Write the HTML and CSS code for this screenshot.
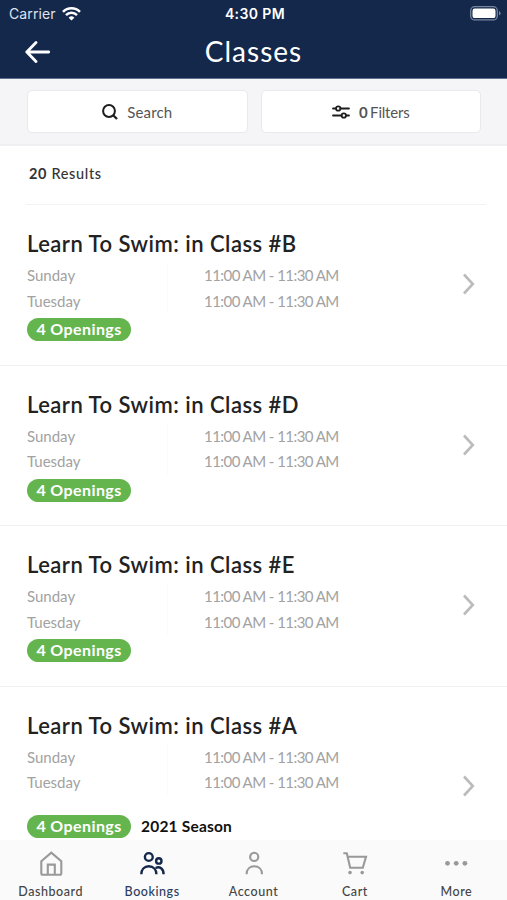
FILE: index.html
```html
<!DOCTYPE html>
<html lang="en">

<head>
  <meta charset="UTF-8">
  <meta name="viewport" content="width=device-width, initial-scale=1.0">
  <title>Classes</title>
  <link rel="stylesheet" href="styles.css">
</head>

<body>
  <header>
    <div class="status-bar">
      <div class="carrier">
        <span>Carrier</span>
        <svg width="19" height="14" viewBox="0 0 19 14" fill="none" stroke="#fff" stroke-width="2.5">
          <path d="M1 4.9a12 12 0 0 1 17 0" />
          <path d="M4 8.1a7.8 7.8 0 0 1 11 0" />
          <path d="M9.5 13.6L6.6 10.7a4.1 4.1 0 0 1 5.8 0z" fill="#fff" stroke="none" />
        </svg>
      </div>
      <div class="time">4:30 PM</div>
      <div class="battery">
        <svg width="31" height="15" viewBox="0 0 31 15">
          <rect x=".7" y=".7" width="26.6" height="13.2" rx="4" fill="none" stroke="#7885a0" stroke-width="1.3" />
          <rect x="2.5" y="2.5" width="23" height="9.6" rx="2.2" fill="#fff" />
          <path d="M29 5v4.6q1.600-.8 1.600-2.300T29 5z" fill="#7885a0" />
        </svg>
      </div>
    </div>
    <div class="nav-bar">
      <svg width="26" height="22" viewBox="0 0 26 22" fill="none" stroke="#fff" stroke-width="2.8" stroke-linecap="round" stroke-linejoin="round">
        <path d="M11 1.500L1.800 11l9.200 9.500M1.800 11h21.900" />
      </svg>
      <h1>Classes</h1>
    </div>
  </header>

  <div class="toolbar">
    <button class="tool-btn">
      <svg width="16" height="16" viewBox="0 0 16 16" fill="none" stroke="#1d1d1d" stroke-width="2">
        <circle cx="7" cy="7" r="5.9" />
        <path d="M11.2 11.2L15 15" stroke-width="2.3" />
      </svg>
      <span class="search-label">Search</span>
    </button>
    <button class="tool-btn">
      <svg width="18" height="14" viewBox="0 0 18 14" fill="none" stroke="#1d1d1d" stroke-width="1.8" stroke-linecap="round">
        <path d="M1 3.500h3M8.500 3.500H17M1 10.500h8.500M14 10.500h3" />
        <circle cx="6.2" cy="3.5" r="2.2" />
        <circle cx="11.8" cy="10.5" r="2.2" />
      </svg>
      <span class="filter-label"><b>0</b> Filters</span>
    </button>
  </div>

  <main>
    <div class="results"><b>20</b> Results</div>

    <div class="card">
      <div class="card-body">
        <h2>Learn To Swim: in Class #B</h2>
        <div class="schedule">
          <div class="days">
            <div>Sunday</div>
            <div>Tuesday</div>
          </div>
          <div class="times">
            <div>11:00 AM - 11:30 AM</div>
            <div>11:00 AM - 11:30 AM</div>
          </div>
        </div>
        <div class="tags"><span class="badge">4 Openings</span></div>
      </div>
      <svg class="chevron" width="12" height="22" viewBox="0 0 12 22"><path d="M1 1.500L9.800 11L1 20.500" /></svg>
    </div>

    <div class="card">
      <div class="card-body">
        <h2>Learn To Swim: in Class #D</h2>
        <div class="schedule">
          <div class="days">
            <div>Sunday</div>
            <div>Tuesday</div>
          </div>
          <div class="times">
            <div>11:00 AM - 11:30 AM</div>
            <div>11:00 AM - 11:30 AM</div>
          </div>
        </div>
        <div class="tags"><span class="badge">4 Openings</span></div>
      </div>
      <svg class="chevron" width="12" height="22" viewBox="0 0 12 22"><path d="M1 1.500L9.800 11L1 20.500" /></svg>
    </div>

    <div class="card">
      <div class="card-body">
        <h2>Learn To Swim: in Class #E</h2>
        <div class="schedule">
          <div class="days">
            <div>Sunday</div>
            <div>Tuesday</div>
          </div>
          <div class="times">
            <div>11:00 AM - 11:30 AM</div>
            <div>11:00 AM - 11:30 AM</div>
          </div>
        </div>
        <div class="tags"><span class="badge">4 Openings</span></div>
      </div>
      <svg class="chevron" width="12" height="22" viewBox="0 0 12 22"><path d="M1 1.500L9.800 11L1 20.500" /></svg>
    </div>

    <div class="card card-season">
      <div class="card-body">
        <h2>Learn To Swim: in Class #A</h2>
        <div class="schedule">
          <div class="days">
            <div>Sunday</div>
            <div>Tuesday</div>
          </div>
          <div class="times">
            <div>11:00 AM - 11:30 AM</div>
            <div>11:00 AM - 11:30 AM</div>
          </div>
        </div>
        <div class="tags"><span class="badge">4 Openings</span><span class="season">2021 Season</span></div>
      </div>
      <svg class="chevron" width="12" height="22" viewBox="0 0 12 22"><path d="M1 1.500L9.800 11L1 20.500" /></svg>
    </div>
  </main>

  <nav class="tab-bar">
    <a class="tab">
      <svg width="26" height="26" viewBox="0 0 26 26">
        <path d="M3.300 11.300L13.300 2.700l10 8.600v12q0 1.500-1.500 1.500h-17q-1.500 0-1.500-1.500z" />
        <path d="M9.800 24.500V14.600h7v9.900" />
      </svg>
      <span>Dashboard</span>
    </a>
    <a class="tab active">
      <svg width="26" height="26" viewBox="0 0 26 26">
        <circle cx="9.8" cy="7" r="3.9" />
        <circle cx="19.8" cy="10.9" r="2.7" />
        <path d="M2.300 24.300c0-4.800 3-8 7.500-8s7.600 3.200 7.600 8M16.600 18c4-1.900 8 .6 8 6.300" />
      </svg>
      <span>Bookings</span>
    </a>
    <a class="tab">
      <svg width="26" height="26" viewBox="0 0 26 26">
        <circle cx="13.2" cy="6.9" r="4.1" />
        <path d="M5.600 24.200c0-4.800 3.200-7.900 7.700-7.900s7.700 3.100 7.700 7.900" />
      </svg>
      <span>Account</span>
    </a>
    <a class="tab">
      <svg width="26" height="26" viewBox="0 0 26 26">
        <path d="M1.300 3.300h3.500L8.200 17.700h12.600l3.200-11H5.800" />
        <circle class="dot" cx="8" cy="22.6" r="1.8" />
        <circle class="dot" cx="20.2" cy="22.6" r="1.8" />
      </svg>
      <span>Cart</span>
    </a>
    <a class="tab">
      <svg width="26" height="26" viewBox="0 0 26 26">
        <circle class="dot" cx="4.5" cy="13.3" r="2.4" />
        <circle class="dot" cx="13.2" cy="13.3" r="2.4" />
        <circle class="dot" cx="21.9" cy="13.3" r="2.4" />
      </svg>
      <span>More</span>
    </a>
  </nav>
</body>

</html>
```
FILE: styles.css
```css
* {
  margin: 0;
  padding: 0;
  box-sizing: border-box;
}

body {
  height: 100vh;
  display: flex;
  flex-direction: column;
  overflow: hidden;
  background: #fff;
  font-family: Lato, sans-serif;
  color: #222;
}

svg {
  display: block;
  flex: none;
}

header {
  height: 79px;
  flex: none;
  background: #14284b;
  border-bottom: 1px solid #5c708f;
  color: #fff;
}

.status-bar {
  height: 27px;
  padding: 0 6px 0 9px;
  display: grid;
  grid-template-columns: 1fr auto 1fr;
  align-items: center;
  font-family: Inter, sans-serif;
  font-size: 14px;
}

.carrier {
  display: flex;
  align-items: center;
  gap: 6px;
  letter-spacing: 0.1px;
  color: #dfe4ee;
}

.time {
  font-weight: 600;
  letter-spacing: 0.4px;
}

.battery {
  display: flex;
  justify-content: flex-end;
}

.nav-bar {
  height: 49px;
  padding: 0 25px;
  display: grid;
  grid-template-columns: 26px 1fr 26px;
  align-items: center;
}

h1 {
  font-size: 28px;
  line-height: 49px;
  font-weight: 400;
  letter-spacing: 1px;
  text-align: center;
}

.toolbar {
  height: 67px;
  flex: none;
  padding: 11px 26px 13px 27px;
  display: flex;
  gap: 13px;
  background: #f5f5f7;
  border-bottom: 2px solid #efeff1;
}

.tool-btn {
  flex: 1;
  height: 43px;
  display: flex;
  justify-content: center;
  align-items: center;
  gap: 9px;
  background: #fff;
  border: 1px solid #e9e9eb;
  border-radius: 5px;
  font-family: inherit;
  font-size: 15px;
  color: #555;
}

.search-label {
  letter-spacing: 0.1px;
}

.filter-label {
  word-spacing: -1px;
  letter-spacing: -0.2px;
}

main {
  flex: 1;
  min-height: 0;
  overflow: hidden;
}

.results {
  height: 59px;
  margin: 0 21px 0 26px;
  padding-left: 3px;
  border-bottom: 1px solid #f3f3f3;
  font-size: 14.5px;
  line-height: 56px;
  font-weight: 500;
  letter-spacing: 0.65px;
  color: #333;
}

.card {
  height: 160.5px;
  padding: 24px 32px 0 27px;
  display: flex;
  justify-content: space-between;
  border-bottom: 1px solid #f1f1f1;
}

h2 {
  height: 34px;
  font-size: 22px;
  line-height: 30px;
  font-weight: 600;
  letter-spacing: 0.48px;
  white-space: nowrap;
}

.schedule {
  display: flex;
  font-size: 15px;
  line-height: 25.5px;
  color: #a2a2a2;
}

.days {
  width: 141px;
  border-right: 1px solid #fbfbfb;
}

.times {
  padding-left: 36px;
  letter-spacing: -0.55px;
}

.tags {
  margin-top: 4px;
  display: flex;
  align-items: center;
  gap: 10px;
}

.badge {
  width: 104px;
  height: 23px;
  border-radius: 12px;
  background: #65b54e;
  color: #fff;
  font-size: 16px;
  line-height: 22px;
  font-weight: 700;
  letter-spacing: 0.4px;
  text-align: center;
}

.season {
  font-size: 15.5px;
  font-weight: 700;
  letter-spacing: 0.2px;
  color: #111;
}

.chevron {
  margin-top: 44px;
  fill: none;
  stroke: #bbb;
  stroke-width: 2.6;
}

.card-season {
  height: 201px;
}

.card-season .tags {
  margin-top: 19px;
}

.card-season .chevron {
  margin-top: 64px;
}

.tab-bar {
  height: 60px;
  flex: none;
  display: flex;
  background: #fafafa;
}

.tab {
  flex: 1;
  padding-top: 10px;
  display: flex;
  flex-direction: column;
  align-items: center;
  font-size: 12.5px;
  line-height: 15px;
  font-weight: 500;
  letter-spacing: 0.55px;
  color: #444;
}

.tab svg {
  margin-bottom: 8px;
  fill: none;
  stroke: #999;
  stroke-width: 2.1;
}

.tab .dot {
  fill: #999;
  stroke: none;
}

.tab.active {
  color: #2b3c5e;
}

.tab.active svg {
  stroke: #14284b;
  stroke-width: 2.4;
}
```
